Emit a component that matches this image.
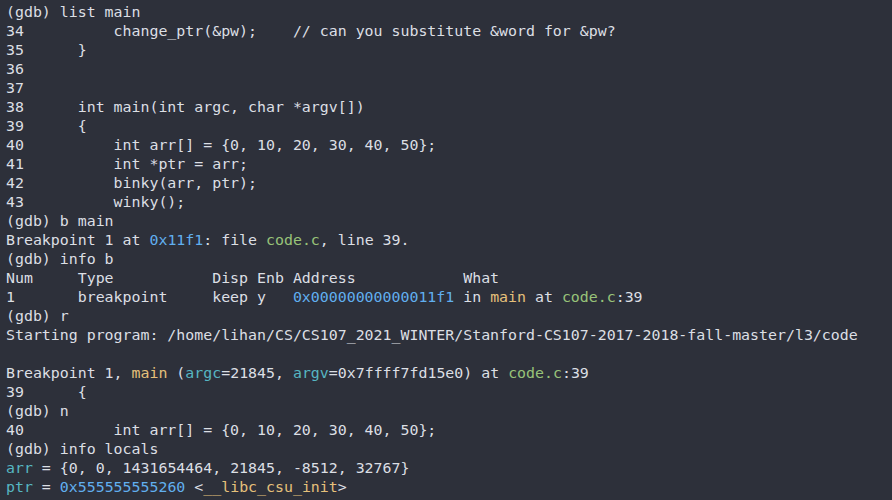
import React from 'react';

type Seg = [string, string?];

const C = {
  fg: 'text-[#dcdfe4]',
  blue: 'text-[#61afef]',
  green: 'text-[#98c379]',
  yellow: 'text-[#e5c07b]',
  cyan: 'text-[#56b6c2]',
};

const lines: Seg[][] = [
  [['(gdb) list main']],
  [['34          change_ptr(&pw);    // can you substitute &word for &pw?']],
  [['35      }']],
  [['36']],
  [['37']],
  [['38      int main(int argc, char *argv[])']],
  [['39      {']],
  [['40          int arr[] = {0, 10, 20, 30, 40, 50};']],
  [['41          int *ptr = arr;']],
  [['42          binky(arr, ptr);']],
  [['43          winky();']],
  [['(gdb) b main']],
  [['Breakpoint 1 at '], ['0x11f1', C.blue], [': file '], ['code.c', C.green], [', line 39.']],
  [['(gdb) info b']],
  [['Num     Type           Disp Enb Address            What']],
  [['1       breakpoint     keep y   '], ['0x00000000000011f1', C.blue], [' in '], ['main', C.yellow], [' at '], ['code.c', C.green], [':39']],
  [['(gdb) r']],
  [['Starting program: /home/lihan/CS/CS107_2021_WINTER/Stanford-CS107-2017-2018-fall-master/l3/code']],
  [['']],
  [['Breakpoint 1, '], ['main', C.yellow], [' ('], ['argc', C.cyan], ['=21845, '], ['argv', C.cyan], ['=0x7ffff7fd15e0) at '], ['code.c', C.green], [':39']],
  [['39      {']],
  [['(gdb) n']],
  [['40          int arr[] = {0, 10, 20, 30, 40, 50};']],
  [['(gdb) info locals']],
  [['arr', C.cyan], [' = {0, 0, 1431654464, 21845, -8512, 32767}']],
  [['ptr', C.cyan], [' = '], ['0x555555555260', C.blue], [' <'], ['__libc_csu_init', C.yellow], ['>']],
  [['(gdb) ']],
];

export default function App() {
  return (
    <div className="w-[892px] h-[500px] overflow-hidden bg-[#2d303a] pl-[6px] pt-[3px]">
      <div className="font-['DejaVu_Sans_Mono',monospace] text-[14.9px] leading-[19px] text-[#dcdfe4] whitespace-pre">
        {lines.map((segs, i) => (
          <div key={i} className="h-[19px]">
            {segs.map(([t, cls], j) => (
              <span key={j} className={cls ?? C.fg}>{t}</span>
            ))}
          </div>
        ))}
      </div>
    </div>
  );
}
